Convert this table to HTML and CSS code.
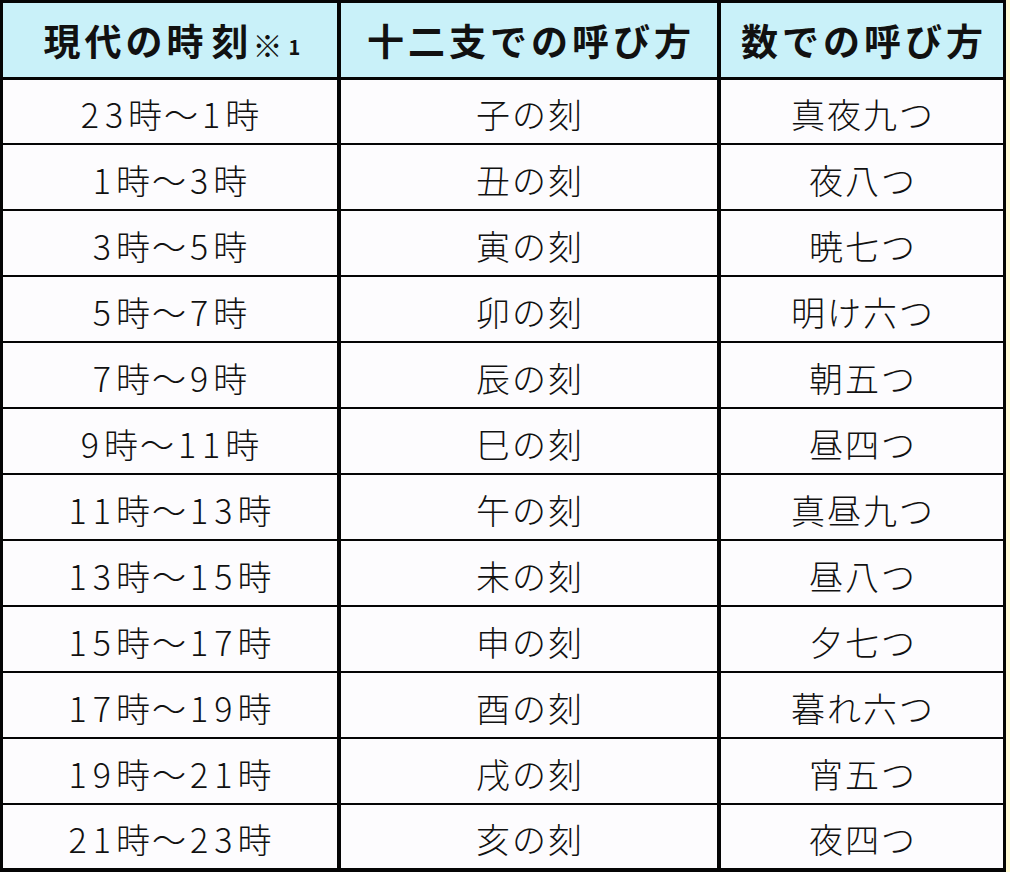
FILE: index.html
```html
<!DOCTYPE html>
<html lang="ja">
<head>
<meta charset="utf-8">
<title>十二支での時刻の呼び方</title>
<link rel="stylesheet" href="styles.css">
</head>
<body>
<div class="table" role="table">
  <div class="cell head" role="columnheader">現代の時<span class="tight">刻</span><span class="mark">※</span><span class="note">1</span></div>
  <div class="cell head" role="columnheader">十二支での呼び方</div>
  <div class="cell head" role="columnheader">数での呼び方</div>

  <div class="cell"><span class="num">23</span>時〜<span class="num">1</span>時</div><div class="cell">子の刻</div><div class="cell">真夜九つ</div>
  <div class="cell"><span class="num">1</span>時〜<span class="num">3</span>時</div><div class="cell">丑の刻</div><div class="cell">夜八つ</div>
  <div class="cell"><span class="num">3</span>時〜<span class="num">5</span>時</div><div class="cell">寅の刻</div><div class="cell">暁七つ</div>
  <div class="cell"><span class="num">5</span>時〜<span class="num">7</span>時</div><div class="cell">卯の刻</div><div class="cell">明け六つ</div>
  <div class="cell"><span class="num">7</span>時〜<span class="num">9</span>時</div><div class="cell">辰の刻</div><div class="cell">朝五つ</div>
  <div class="cell"><span class="num">9</span>時〜<span class="num">11</span>時</div><div class="cell">巳の刻</div><div class="cell">昼四つ</div>
  <div class="cell"><span class="num">11</span>時〜<span class="num">13</span>時</div><div class="cell">午の刻</div><div class="cell">真昼九つ</div>
  <div class="cell"><span class="num">13</span>時〜<span class="num">15</span>時</div><div class="cell">未の刻</div><div class="cell">昼八つ</div>
  <div class="cell"><span class="num">15</span>時〜<span class="num">17</span>時</div><div class="cell">申の刻</div><div class="cell">夕七つ</div>
  <div class="cell"><span class="num">17</span>時〜<span class="num">19</span>時</div><div class="cell">酉の刻</div><div class="cell">暮れ六つ</div>
  <div class="cell"><span class="num">19</span>時〜<span class="num">21</span>時</div><div class="cell">戌の刻</div><div class="cell">宵五つ</div>
  <div class="cell"><span class="num">21</span>時〜<span class="num">23</span>時</div><div class="cell">亥の刻</div><div class="cell">夜四つ</div>
</div>
</body>
</html>
```

FILE: styles.css
```css
html, body {
  margin: 0;
  padding: 0;
}
body {
  width: 1010px;
  height: 872px;
  background: #fffad2;
  font-family: "Noto Sans CJK JP", "Noto Sans", sans-serif;
  color: #111;
  overflow: hidden;
}
.table {
  width: 1006px;
  box-sizing: border-box;
  display: grid;
  grid-template-columns: 334px 376px 282px;
  grid-template-rows: 75px 63px repeat(10, 64px) 63px;
  column-gap: 4px;
  row-gap: 2px;
  padding: 3px 3px 4px 3px;
  background: #050505;
}
.cell {
  background: #fdfcfe;
  display: flex;
  align-items: center;
  justify-content: center;
  box-sizing: border-box;
  padding-top: 5px;
  font-size: 34px;
  font-weight: 300;
  letter-spacing: 2px;
  text-indent: 2px;
  line-height: 1;
  white-space: nowrap;
}
.num {
  font-size: 34px;
  font-weight: 300;
  letter-spacing: 6px;
  margin-right: -3px;
}
.head {
  background: #c9f1f9;
  margin-bottom: 1px;
  padding-top: 0;
  font-size: 37px;
  font-weight: 700;
  letter-spacing: 4px;
  text-indent: 4px;
}
.tight {
  letter-spacing: 0;
}
.mark {
  font-size: 30px;
  letter-spacing: 2px;
  margin-top: 8px;
}
.note {
  font-size: 20px;
  letter-spacing: 0;
  margin-top: 14px;
}
```
